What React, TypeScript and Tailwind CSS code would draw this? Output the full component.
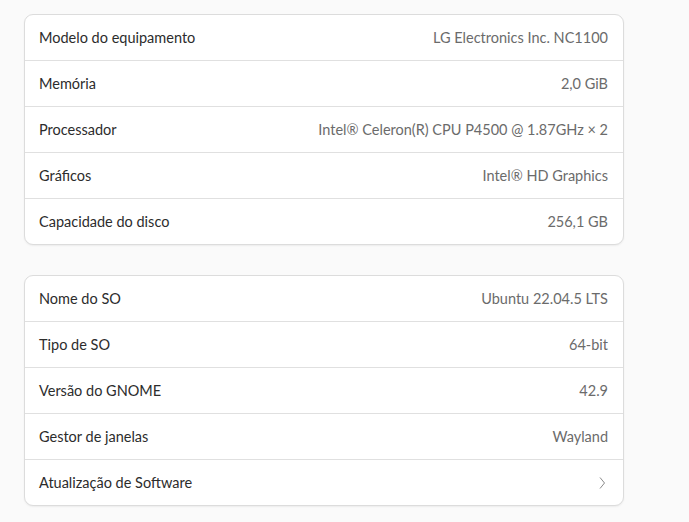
import React from 'react';

type Row = { label: string; value?: string; link?: boolean };

const hardware: Row[] = [
  { label: 'Modelo do equipamento', value: 'LG Electronics Inc. NC1100' },
  { label: 'Memória', value: '2,0 GiB' },
  { label: 'Processador', value: 'Intel® Celeron(R) CPU P4500 @ 1.87GHz × 2' },
  { label: 'Gráficos', value: 'Intel® HD Graphics' },
  { label: 'Capacidade do disco', value: '256,1 GB' },
];

const software: Row[] = [
  { label: 'Nome do SO', value: 'Ubuntu 22.04.5 LTS' },
  { label: 'Tipo de SO', value: '64-bit' },
  { label: 'Versão do GNOME', value: '42.9' },
  { label: 'Gestor de janelas', value: 'Wayland' },
  { label: 'Atualização de Software', link: true },
];

function Card({ rows }: { rows: Row[] }) {
  return (
    <div className="w-[600px] rounded-[9px] border border-[#dcdcdc] bg-white shadow-[0_1px_2px_rgba(0,0,0,0.06)] overflow-hidden">
      {rows.map((r, i) => (
        <div
          key={r.label}
          className={`flex h-[45px] box-content items-center justify-between pl-[14px] pr-[15px] ${i > 0 ? 'border-t border-[#e0e0e0]' : ''}`}
        >
          <span className="text-[#2c2c2c]">{r.label}</span>
          {r.link ? (
            <svg width="10" height="16" viewBox="0 0 10 16" className="mr-[1px]">
              <path d="M3 2.5 L7.5 8 L3 13.5" fill="none" stroke="#8a8a8a" strokeWidth="1" />
            </svg>
          ) : (
            <span className="text-[#6b6b6b]">{r.value}</span>
          )}
        </div>
      ))}
    </div>
  );
}

export default function App() {
  return (
    <div
      className="min-h-[522px] bg-[#fafafa] pl-[24px] pt-[14px] text-[14.5px]"
      style={{ fontFamily: 'Lato, "Noto Sans", sans-serif' }}
    >
      <div className="flex flex-col gap-[30px]">
        <Card rows={hardware} />
        <Card rows={software} />
      </div>
    </div>
  );
}
